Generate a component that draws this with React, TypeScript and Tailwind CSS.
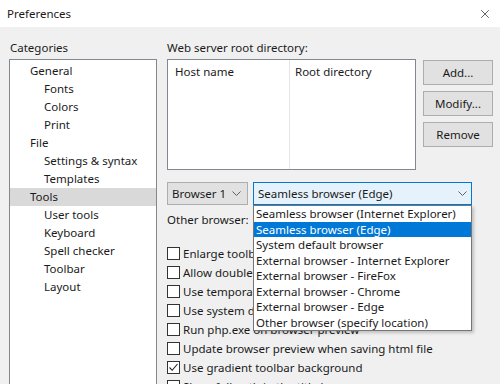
import { X } from "lucide-react";

const tree: { label: string; level: number; selected?: boolean }[] = [
  { label: "General", level: 1 },
  { label: "Fonts", level: 2 },
  { label: "Colors", level: 2 },
  { label: "Print", level: 2 },
  { label: "File", level: 1 },
  { label: "Settings & syntax", level: 2 },
  { label: "Templates", level: 2 },
  { label: "Tools", level: 1, selected: true },
  { label: "User tools", level: 2 },
  { label: "Keyboard", level: 2 },
  { label: "Spell checker", level: 2 },
  { label: "Toolbar", level: 2 },
  { label: "Layout", level: 2 },
];

const browsers = [
  "Seamless browser (Internet Explorer)",
  "Seamless browser (Edge)",
  "System default browser",
  "External browser - Internet Explorer",
  "External browser - FireFox",
  "External browser - Chrome",
  "External browser - Edge",
  "Other browser (specify location)",
];

const options = [
  { label: "Enlarge toolbar buttons", checked: false },
  { label: "Allow double-click on tab to close", checked: false },
  { label: "Use temporary file for preview", checked: false },
  { label: "Use system default browser", checked: false },
  { label: "Run php.exe on browser preview", checked: false },
  { label: "Update browser preview when saving html file", checked: false },
  { label: "Use gradient toolbar background", checked: true },
  { label: "Show full path in the title bar", checked: false },
];

function Chevron() {
  return (
    <svg width="9" height="5" viewBox="0 0 9 5" className="shrink-0">
      <path d="M0.5 0.5 L4.5 4.5 L8.5 0.5" fill="none" stroke="#606060" strokeWidth="1" />
    </svg>
  );
}

function Button({ children }: { children: string }) {
  return (
    <div className="flex h-[25px] w-[70px] items-center justify-center border border-[#adadad] bg-[#e1e1e1]">
      {children}
    </div>
  );
}

export default function App() {
  const selected = 1;

  return (
    <div className="h-[384px] w-[500px] overflow-hidden bg-[#f0f0f0] font-['Noto_Sans',sans-serif] text-[11.5px] text-[#1a1a1a]">
      {/* Title bar */}
      <div className="flex h-[27px] items-center justify-between bg-white pl-[7px] pr-[8px]">
        <span>Preferences</span>
        <X size={14} strokeWidth={1.2} className="text-[#222]" />
      </div>

      <div className="flex pt-[13px]">
        {/* Categories */}
        <div className="ml-[9px] w-[148px] shrink-0">
          <div className="h-[16px] pl-[1px] leading-[16px]">Categories</div>
          <div className="mt-[3px] h-[400px] border border-[#828790] bg-white pt-[2px]">
            {tree.map((item) => (
              <div
                key={item.label}
                className={`h-[18px] leading-[18px] ${item.level === 1 ? "pl-[20px]" : "pl-[34px]"} ${
                  item.selected ? "bg-[#d9d9d9]" : ""
                }`}
              >
                {item.label}
              </div>
            ))}
          </div>
        </div>

        {/* Right pane */}
        <div className="ml-[10px] w-[326px]">
          <div className="h-[16px] leading-[16px]">Web server root directory:</div>
          <div className="mt-[3px] flex">
            <div className="flex h-[111px] w-[249px] border border-[#828790] bg-white">
              <div className="w-[122px] border-r border-[#e5e5e5] pl-[7px] pt-[4px] leading-[16px]">Host name</div>
              <div className="pl-[5px] pt-[4px] leading-[16px]">Root directory</div>
            </div>
            <div className="ml-[7px] mt-[1px] flex flex-col gap-[6px]">
              <Button>Add...</Button>
              <Button>Modify...</Button>
              <Button>Remove</Button>
            </div>
          </div>

          {/* Browser selectors */}
          <div className="mt-[12px] flex gap-[5px]">
            <div className="flex h-[23px] w-[81px] items-center justify-between border border-[#adadad] bg-[#e1e1e1] pl-[4px] pr-[6px]">
              <span>Browser 1</span>
              <Chevron />
            </div>
            <div className="relative w-[219px]">
              <div className="flex h-[23px] items-center justify-between border border-[#0078d7] bg-[#e5f1fb] pl-[4px] pr-[4px]">
                <span>Seamless browser (Edge)</span>
                <Chevron />
              </div>
              <div className="absolute left-0 top-[23px] z-10 w-[219px] border border-[#767676] bg-white shadow-[2px_2px_3px_rgba(0,0,0,0.2)]">
                {browsers.map((b, i) => (
                  <div
                    key={b}
                    className={`h-[15.5px] whitespace-nowrap pl-[2px] leading-[15.5px] ${
                      i === selected ? "bg-[#0078d7] text-white" : ""
                    }`}
                  >
                    {b}
                  </div>
                ))}
              </div>
            </div>
          </div>

          <div className="mt-[5px] flex h-[20px] items-center">Other browser:</div>

          <div className="mt-[14px] flex flex-col">
            {options.map((o) => (
              <div key={o.label} className="flex h-[19px] items-center gap-[3px] whitespace-nowrap">
                <div className="flex h-[13px] w-[13px] shrink-0 items-center justify-center border border-[#333] bg-white">
                  {o.checked && (
                    <svg width="11" height="11" viewBox="0 0 11 11">
                      <path d="M1.5 5.5 L4.2 8.3 L9.5 2" fill="none" stroke="#222" strokeWidth="1.1" />
                    </svg>
                  )}
                </div>
                <span>{o.label}</span>
              </div>
            ))}
          </div>
        </div>
      </div>
    </div>
  );
}
